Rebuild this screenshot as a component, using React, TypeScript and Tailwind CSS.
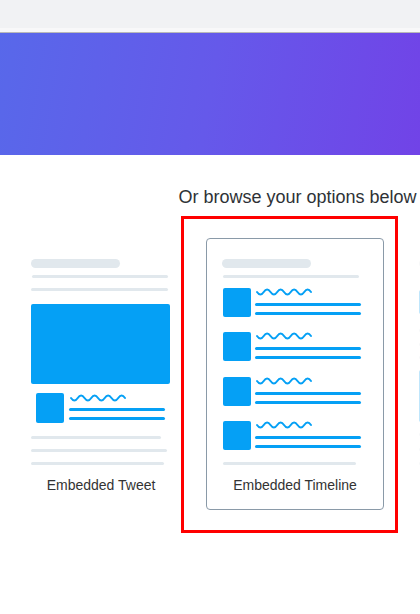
const GRAY = '#e1e8ed'
const BLUE = '#05a0f5'

function Wave({ x, y }: { x: number; y: number }) {
  return (
    <path
      d={`M${x} ${y} q3.4 5 6.75 0 t6.75 0 t6.75 0 t6.75 0 t6.75 0 t6.75 0 t6.75 0 t6.75 0`}
      fill="none"
      stroke={BLUE}
      strokeWidth={2}
      strokeLinecap="round"
    />
  )
}

function TweetArt() {
  return (
    <svg width={140} height={208} viewBox="0 0 140 208" className="block">
      <rect x={0} y={0} width={89} height={9} rx={4.5} fill={GRAY} />
      <rect x={1} y={16} width={136} height={3} rx={1.5} fill={GRAY} />
      <rect x={0} y={29} width={137} height={3} rx={1.5} fill={GRAY} />
      <rect x={0} y={45} width={139} height={80} rx={2} fill={BLUE} />
      <rect x={5} y={134} width={28} height={30} rx={2} fill={BLUE} />
      <Wave x={40} y={139} />
      <rect x={38} y={149} width={96} height={3} rx={1.5} fill={BLUE} />
      <rect x={38} y={158} width={96} height={3} rx={1.5} fill={BLUE} />
      <rect x={0} y={177} width={130} height={3} rx={1.5} fill={GRAY} />
      <rect x={0} y={190} width={136} height={3} rx={1.5} fill={GRAY} />
      <rect x={0} y={203} width={133} height={3} rx={1.5} fill={GRAY} />
    </svg>
  )
}

function TimelineArt() {
  const rows = [29, 73, 118, 162]
  return (
    <svg width={140} height={208} viewBox="0 0 140 208" className="block">
      <rect x={0} y={0} width={89} height={9} rx={4.5} fill={GRAY} />
      <rect x={1} y={16} width={136} height={3} rx={1.5} fill={GRAY} />
      {rows.map((y) => (
        <g key={y}>
          <rect x={1} y={y} width={28} height={29} rx={2} fill={BLUE} />
          <Wave x={35} y={y + 4} />
          <rect x={33} y={y + 15} width={106} height={3} rx={1.5} fill={BLUE} />
          <rect x={33} y={y + 24} width={106} height={3} rx={1.5} fill={BLUE} />
        </g>
      ))}
      <rect x={1} y={203} width={133} height={3} rx={1.5} fill={GRAY} />
    </svg>
  )
}

// third option, mostly off-screen and faded
function FadedArt() {
  return (
    <svg width={140} height={208} viewBox="0 0 140 208" className="block opacity-25">
      <rect x={0} y={0} width={89} height={9} rx={4.5} fill={GRAY} />
      <rect x={0} y={31} width={139} height={24} rx={2} fill={BLUE} />
      <rect x={0} y={70} width={130} height={3} rx={1.5} fill={GRAY} />
      <rect x={0} y={84} width={136} height={3} rx={1.5} fill={GRAY} />
      <rect x={0} y={97} width={133} height={3} rx={1.5} fill={GRAY} />
      <rect x={0} y={111} width={139} height={52} rx={2} fill={BLUE} />
      <rect x={0} y={174} width={130} height={3} rx={1.5} fill={GRAY} />
      <rect x={0} y={189} width={136} height={3} rx={1.5} fill={GRAY} />
      <rect x={0} y={203} width={133} height={3} rx={1.5} fill={GRAY} />
    </svg>
  )
}

export default function App() {
  return (
    <div className="relative w-[420px] h-[614px] overflow-hidden bg-white font-['Liberation_Sans',Arial,sans-serif]">
      {/* browser-ish top strip */}
      <div className="h-[28px] bg-[#f1f2f4]" />
      <div className="h-[5px] border-b border-[#b9b9b9] bg-[#f8f8f9]" />
      <div className="h-[122px] bg-[linear-gradient(100deg,#5868ea_0%,#6559ea_50%,#7143e7_100%)]" />

      <div className="w-[595px] flex flex-col items-center">
        <h2 className="mt-[28px] text-[18px] leading-[28px] text-[#2e3236] font-normal">
          Or browse your options below
        </h2>

        <div className="self-start flex pl-[15px] mt-[27px]">
          <div className="w-[171px] border border-transparent rounded-[4px] px-[15px] pt-[20px] pb-[14px] flex flex-col">
            <TweetArt />
            <div className="mt-[8px] text-[14px] leading-[20px] text-[#333] text-center w-[140px]">Embedded Tweet</div>
          </div>
          <div className="ml-[20px] w-[178px] border border-[#8a9aa8] rounded-[4px] px-[15px] pt-[20px] pb-[14px] flex flex-col">
            <TimelineArt />
            <div className="mt-[8px] text-[14px] leading-[20px] text-[#333] text-center">Embedded Timeline</div>
          </div>
          <div className="ml-[19px] w-[178px] border border-transparent rounded-[4px] px-[15px] pt-[20px] pb-[14px] flex flex-col">
            <FadedArt />
            <div className="mt-[8px] h-[20px]" />
          </div>
        </div>
      </div>

      {/* highlight box */}
      <div className="absolute left-[181px] top-[216px] w-[217px] h-[317px] border-[3px] border-[#ff0000] pointer-events-none" />
    </div>
  )
}
